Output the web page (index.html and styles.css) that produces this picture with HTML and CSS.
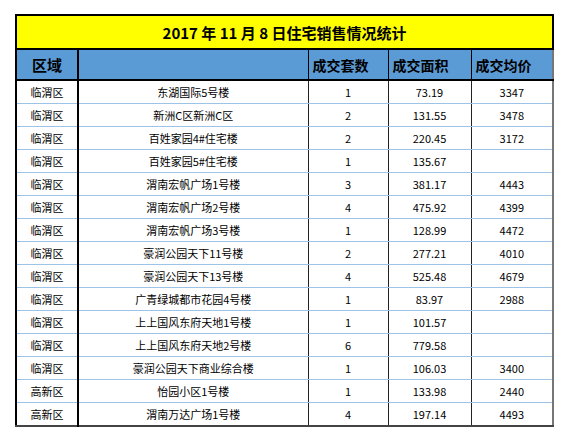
FILE: index.html
```html
<!DOCTYPE html>
<html lang="zh">
<head>
    <meta charset="utf-8">
    <title>2017年11月8日住宅销售情况统计</title>
    <link rel="stylesheet" href="styles.css">
</head>
<body>
<table class="sheet">
    <colgroup>
        <col class="c-area">
        <col class="c-name">
        <col class="c-num">
        <col class="c-size">
        <col class="c-price">
    </colgroup>
    <tr class="title">
        <td colspan="5">2017 年 11 月 8 日住宅销售情况统计</td>
    </tr>
    <tr class="head">
        <th class="area">区域</th>
        <th></th>
        <th>成交套数</th>
        <th>成交面积</th>
        <th>成交均价</th>
    </tr>
    <tr><td>临渭区</td><td>东湖国际5号楼</td><td>1</td><td>73.19</td><td>3347</td></tr>
    <tr><td>临渭区</td><td>新洲C区新洲C区</td><td>2</td><td>131.55</td><td>3478</td></tr>
    <tr><td>临渭区</td><td>百姓家园4#住宅楼</td><td>2</td><td>220.45</td><td>3172</td></tr>
    <tr><td>临渭区</td><td>百姓家园5#住宅楼</td><td>1</td><td>135.67</td><td></td></tr>
    <tr><td>临渭区</td><td>渭南宏帆广场1号楼</td><td>3</td><td>381.17</td><td>4443</td></tr>
    <tr><td>临渭区</td><td>渭南宏帆广场2号楼</td><td>4</td><td>475.92</td><td>4399</td></tr>
    <tr><td>临渭区</td><td>渭南宏帆广场3号楼</td><td>1</td><td>128.99</td><td>4472</td></tr>
    <tr><td>临渭区</td><td>豪润公园天下11号楼</td><td>2</td><td>277.21</td><td>4010</td></tr>
    <tr><td>临渭区</td><td>豪润公园天下13号楼</td><td>4</td><td>525.48</td><td>4679</td></tr>
    <tr><td>临渭区</td><td>广青绿城都市花园4号楼</td><td>1</td><td>83.97</td><td>2988</td></tr>
    <tr><td>临渭区</td><td>上上国风东府天地1号楼</td><td>1</td><td>101.57</td><td></td></tr>
    <tr><td>临渭区</td><td>上上国风东府天地2号楼</td><td>6</td><td>779.58</td><td></td></tr>
    <tr><td>临渭区</td><td>豪润公园天下商业综合楼</td><td>1</td><td>106.03</td><td>3400</td></tr>
    <tr><td>高新区</td><td>怡园小区1号楼</td><td>1</td><td>133.98</td><td>2440</td></tr>
    <tr><td>高新区</td><td>渭南万达广场1号楼</td><td>4</td><td>197.14</td><td>4493</td></tr>
</table>
</body>
</html>
```

FILE: styles.css
```css
body {
    margin: 0;
    background: #fff;
    font-family: "Noto Sans CJK SC", "Noto Sans", sans-serif;
    color: #000;
}

.sheet {
    margin: 14px 0 0 15px;
    border-collapse: collapse;
    table-layout: fixed;
    width: 537px;
    border-top: 2px solid #000;
    border-left: 2px solid #000;
    border-right: 2px solid #777;
    border-bottom: 2px solid #444;
}

.c-area { width: 62px; }
.c-name { width: 230px; }
.c-num { width: 80px; }
.c-size { width: 83px; }
.c-price { width: 82px; }

.sheet td,
.sheet th {
    padding: 0;
    text-align: center;
    font-size: 11px;
    height: 22px;
    border-top: 1px solid #9dc3e6;
    border-bottom: 1px solid #9dc3e6;
    border-left: 1px solid #222;
    border-right: 1px solid #222;
    white-space: nowrap;
}

.sheet td:first-child {
    border-right: 2px solid #000;
}

.title td {
    background: #ffff00;
    font-size: 15px;
    font-weight: bold;
    height: 32px;
    border-bottom: 2px solid #000;
}

.head th {
    background: #5b9bd5;
    font-size: 14px;
    font-weight: bold;
    text-align: left;
    padding-left: 4px;
    height: 29px;
    border-bottom: 2px solid #000;
    border-left: 1px solid #000;
    border-right: 1px solid #000;
}

.head th.area {
    text-align: center;
    padding-left: 0;
    font-size: 15px;
    border-right: 2px solid #000;
}
```
